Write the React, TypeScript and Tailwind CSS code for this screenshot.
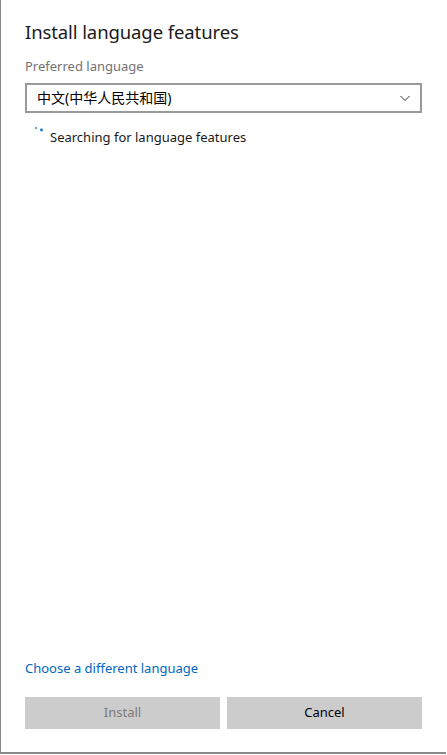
export default function App() {
  return (
    <div className="h-[755px] w-[447px] bg-white font-['Noto_Sans','Noto_Sans_CJK_SC',sans-serif]">
      <div className="flex h-[754px] w-[446px] flex-col border-b-2 border-l border-[#8a8a8a] pl-6 pr-6">
        {/* Title */}
        <h1 className="mt-[18px] text-[18.5px] leading-[28px] tracking-[-0.1px] text-[#1a1a1a]">Install language features</h1>

        {/* Preferred language */}
        <div className="mt-[10px] text-[13px] leading-[20px] text-[#737373]">Preferred language</div>
        <div className="mt-[7px] flex h-[30px] items-center justify-between border-2 border-[#999999] pl-[10px] pr-[9px]">
          <span className="text-[14px] leading-[20px] text-black">中文(中华人民共和国)</span>
          <svg width="12" height="12" viewBox="0 0 12 12" fill="none">
            <path d="M1.5 4 L6 8.5 L10.5 4" stroke="#333" strokeWidth="1" />
          </svg>
        </div>

        {/* Status */}
        <div className="mt-[13px] flex items-start">
          <svg width="18" height="12" viewBox="0 0 18 12" className="ml-[9px] shrink-0">
            <circle cx="2" cy="2" r="1.2" fill="#70a8dd" />
            <circle cx="7.5" cy="4" r="1.4" fill="#0a74d0" />
          </svg>
          <span className="mt-[1px] ml-[-2px] text-[13px] leading-[20px] text-[#1a1a1a]">Searching for language features</span>
        </div>

        <div className="flex-1" />

        {/* Footer */}
        <a className="mb-[19px] text-[13px] leading-[20px] text-[#0067c0]">Choose a different language</a>
        <div className="mb-[23px] flex gap-[7px]">
          <button className="h-[32px] flex-1 bg-[#cccccc] text-[13px] text-[#7a7a7a]">Install</button>
          <button className="h-[32px] flex-1 bg-[#cccccc] text-[13px] text-black">Cancel</button>
        </div>
      </div>
    </div>
  );
}
